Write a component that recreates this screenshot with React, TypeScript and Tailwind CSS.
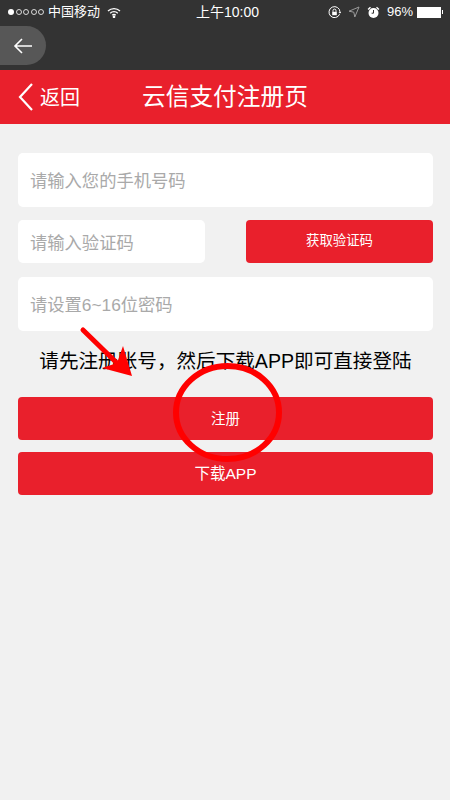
export default function App() {
    return (
        <div className="relative w-[450px] h-[800px] overflow-hidden bg-[#f1f1f1] font-['Liberation_Sans','Noto_Sans_CJK_SC',sans-serif]">
            {/* status bar + browser bar */}
            <div className="h-[70px] bg-[#333333] text-white">
                <div className="relative flex h-[24px] items-center pl-[8px] pr-[7px] text-[13px]">
                    <div className="flex items-center gap-[1.5px]">
                        <span className="w-[6px] h-[6px] rounded-full bg-white" />
                        <span className="w-[6px] h-[6px] rounded-full border border-white/80" />
                        <span className="w-[6px] h-[6px] rounded-full border border-white/80" />
                        <span className="w-[6px] h-[6px] rounded-full border border-white/80" />
                        <span className="w-[6px] h-[6px] rounded-full border border-white/80" />
                    </div>
                    <span className="ml-[4px]">中国移动</span>
                    <svg className="ml-[7px]" width="14" height="11" viewBox="0 0 14 11" fill="none" stroke="white" strokeWidth="1.3">
                        <path d="M1 4a8.6 8.6 0 0 1 12 0" />
                        <path d="M3.2 6.2a5.4 5.4 0 0 1 7.6 0" />
                        <path d="M5.3 8.2a2.4 2.4 0 0 1 3.4 0" />
                        <circle cx="7" cy="9.8" r=".7" fill="white" />
                    </svg>
                    <span className="ml-[75px] text-[14px]">上午10:00</span>
                    <div className="ml-auto flex items-center">
                        <svg width="13" height="13" viewBox="0 0 13 13" fill="none" stroke="white" strokeWidth="1">
                            <path d="M11.6 8.2A5.5 5.5 0 1 1 12 6" />
                            <path d="M10.5 6h3l-1.5 1.6z" fill="white" stroke="none" />
                            <rect x="4.2" y="5.8" width="4.6" height="3.4" fill="white" stroke="none" />
                            <path d="M5 5.8V4.6a1.5 1.5 0 0 1 3 0v1.2" />
                        </svg>
                        <svg className="ml-[7px]" width="12" height="12" viewBox="0 0 12 12" fill="none" stroke="#9a9a9a" strokeWidth="1">
                            <path d="M11 1 1 5.2l4.8 1 1 4.8z" />
                        </svg>
                        <svg className="ml-[7px]" width="13" height="13" viewBox="0 0 13 13" fill="white">
                            <circle cx="6.5" cy="7" r="5" />
                            <path d="M.6 3 3 .7l1 1L1.6 4zM12.4 3 10 .7l-1 1L11.4 4z" />
                            <path d="M6.5 4v3.2H4.6" fill="none" stroke="#333333" strokeWidth="1" />
                        </svg>
                        <span className="ml-[7px] text-[13px]">96%</span>
                        <div className="ml-[4px] w-[24px] h-[11px] border border-white bg-white" />
                        <span className="w-[1px] h-[4px] ml-[1px] bg-white" />
                    </div>
                </div>
                <div className="flex h-[39px] w-[46px] mt-[2px] items-center justify-center rounded-r-[20px] bg-[#575757]">
                    <svg width="20" height="16" viewBox="0 0 20 16" fill="none" stroke="white" strokeWidth="1.6">
                        <path d="M19 8H2M9 1 2 8l7 7" />
                    </svg>
                </div>
            </div>

            {/* header */}
            <div className="flex h-[54px] items-center bg-[#e9202c] text-white">
                <svg className="ml-[18px]" width="15" height="28" viewBox="0 0 15 28" fill="none" stroke="white" strokeWidth="2.2">
                    <path d="M14 1 2 14l12 13" />
                </svg>
                <span className="ml-[7px] text-[20px] pt-[1px]">返回</span>
                <span className="ml-[62px] text-[23.7px] pt-[1px]">云信支付注册页</span>
            </div>

            {/* form */}
            <div className="pl-[18px] pr-[17px] pt-[29px]">
                <div className="flex h-[54px] items-center rounded-[5px] bg-white pl-[12px] pt-[4px] text-[17.3px] text-[#a9a9a9]">
                    请输入您的手机号码
                </div>
                <div className="mt-[13px] flex justify-between">
                    <div className="flex h-[43px] w-[187px] items-center rounded-[5px] bg-white pl-[12px] pt-[4px] text-[17.3px] text-[#a9a9a9]">
                        请输入验证码
                    </div>
                    <button className="h-[43px] w-[187px] rounded-[4px] bg-[#e9202c] text-[13.4px] text-white">获取验证码</button>
                </div>
                <div className="mt-[14px] flex h-[54px] items-center rounded-[5px] bg-white pl-[12px] pt-[4px] text-[17.3px] text-[#a9a9a9]">
                    请设置6~16位密码
                </div>
                <p className="mt-[18px] h-[24px] text-center text-[19.6px] leading-[24px] text-black">
                    请先注册账号，然后下载APP即可直接登陆
                </p>
                <button className="mt-[24px] block h-[43px] w-full rounded-[4px] bg-[#e9202c] pt-[2px] text-[14.5px] text-white">注册</button>
                <button className="mt-[12px] block h-[43px] w-full rounded-[4px] bg-[#e9202c] text-[15.5px] text-white">下载APP</button>
            </div>

            {/* red annotation drawn over the page */}
            <svg className="absolute left-0 top-0 pointer-events-none" width="450" height="800" viewBox="0 0 450 800" fill="none">
                <ellipse cx="227.5" cy="412.5" rx="51.5" ry="46.5" stroke="#ff0000" strokeWidth="6" />
                <path d="M83 330 121 367" stroke="#ff0000" strokeWidth="5" strokeLinecap="round" />
                <path d="M132 376 102 368 117 363 123 346z" fill="#ff0000" />
            </svg>
        </div>
    );
}
